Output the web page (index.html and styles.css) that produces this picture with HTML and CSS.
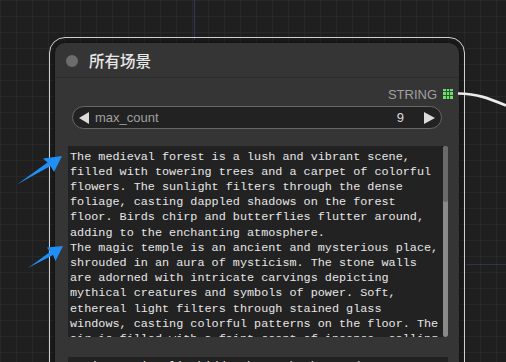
FILE: index.html
```html
<!DOCTYPE html>
<html lang="en">

<head>
    <meta charset="UTF-8">
    <meta name="viewport" content="width=device-width, initial-scale=1.0">
    <title>Node Canvas</title>
    <link rel="stylesheet" href="styles.css">
</head>

<body>
    <div class="canvas">
        <!-- faint links behind the node -->
        <svg class="links-back" width="506" height="362">
            <line x1="194.5" y1="0" x2="194.5" y2="40" stroke="#2c3a5c" stroke-width="1" />
            <line x1="466" y1="264.5" x2="506" y2="264.5" stroke="#2c3450" stroke-width="1" />
        </svg>

        <div class="node">
            <div class="node-title">
                <span class="dot"></span>
                <span class="title-text">所有场景</span>
            </div>
            <div class="node-body">
                <div class="output-row">
                    <span class="slot-label">STRING</span>
                    <span class="slot-grid">
                        <i></i><i></i><i></i><i></i><i></i><i></i><i></i><i></i><i></i>
                    </span>
                </div>

                <div class="number-widget">
                    <span class="arrow arrow-left"></span>
                    <span class="widget-label">max_count</span>
                    <span class="widget-value">9</span>
                    <span class="arrow arrow-right"></span>
                </div>

                <div class="textbox">
                    <div class="text-content">The medieval forest is a lush and vibrant scene,
filled with towering trees and a carpet of colorful
flowers. The sunlight filters through the dense
foliage, casting dappled shadows on the forest
floor. Birds chirp and butterflies flutter around,
adding to the enchanting atmosphere.
The magic temple is an ancient and mysterious place,
shrouded in an aura of mysticism. The stone walls
are adorned with intricate carvings depicting
mythical creatures and symbols of power. Soft,
ethereal light filters through stained glass
windows, casting colorful patterns on the floor. The
air is filled with a faint scent of incense, calling</div>
                    <div class="scrollbar">
                        <div class="thumb"></div>
                    </div>
                </div>

                <div class="textbox textbox-next">
                    <div class="text-content">Ancient ruins lie hidden beneath the sand.</div>
                </div>
            </div>
        </div>

        <!-- output link leaving the STRING slot -->
        <svg class="wire" width="506" height="362">
            <path d="M458 93.5 C478 94, 488 98, 506 105.5" fill="none" stroke="#ececec" stroke-width="2.6" />
        </svg>

        <!-- annotation arrows -->
        <svg class="marks" width="506" height="362">
            <polygon points="62,156 43,158.5 47.5,162.5 17,184.5 50.5,166 54,172" fill="#1f8ff5" />
            <polygon points="63,246 47,247.5 50,252 28,268 53,255 55.5,261" fill="#1f8ff5" />
        </svg>
    </div>
</body>

</html>
```

FILE: styles.css
```css
body {
    margin: 0;
    padding: 0;
    overflow: hidden;
    background: #1f1f1f;
}

.canvas {
    position: relative;
    width: 506px;
    height: 362px;
    overflow: hidden;
    background-color: #1f1f1f;
    background-image:
        linear-gradient(#282828 1px, transparent 1px),
        linear-gradient(90deg, #282828 1px, transparent 1px);
    background-size: 16px 16px;
}

.links-back,
.wire,
.marks {
    position: absolute;
    left: 0;
    top: 0;
    pointer-events: none;
}

/* node sits on the free canvas */
.node {
    position: absolute;
    left: 55px;
    top: 43px;
    width: 404px;
    height: 340px;
    background: #353535;
    border-radius: 10px 10px 0 0;
    outline: 1.5px solid #d0d0d0;
    outline-offset: 5px;
    box-shadow: 0 0 6px 2px rgba(0, 0, 0, 0.45);
    font-family: 'Liberation Sans', Arial, sans-serif;
}

.node-title {
    height: 34px;
    display: flex;
    align-items: center;
    padding-left: 11px;
    border-bottom: 1px solid #2c2c2c;
}

.dot {
    width: 12px;
    height: 12px;
    border-radius: 50%;
    background: #6c6c6c;
    margin-top: 2px;
}

.title-text {
    margin-left: 11px;
    font-family: 'Noto Sans CJK SC', 'Noto Sans', sans-serif;
    font-size: 15.5px;
    font-weight: 500;
    color: #e8e8e8;
}

.node-body {
    display: flex;
    flex-direction: column;
}

.output-row {
    height: 18px;
    margin-top: 7px;
    display: flex;
    justify-content: flex-end;
    align-items: center;
    padding-right: 6px;
}

.slot-label {
    font-size: 13px;
    color: #a0a0a0;
    margin-right: 6px;
}

.slot-grid {
    width: 10px;
    height: 10px;
    display: grid;
    grid-template-columns: repeat(3, 1fr);
    gap: 1px;
    background: #2c5a2c;
    margin-top: -1px;
}

.slot-grid i {
    background: #6ee06e;
}

.number-widget {
    height: 21px;
    margin: 3px 17px 0;
    border: 1px solid #676767;
    border-radius: 12px;
    background: #222;
    display: flex;
    align-items: center;
    padding: 0 6px;
    font-size: 13px;
}

.arrow {
    width: 0;
    height: 0;
    border-top: 6px solid transparent;
    border-bottom: 6px solid transparent;
}

.arrow-left {
    border-right: 10px solid #dcdcdc;
}

.arrow-right {
    border-left: 11px solid #dcdcdc;
}

.widget-label {
    color: #a0a0a0;
    margin-left: 6px;
    flex: 1;
}

.widget-value {
    color: #dcdcdc;
    margin-right: 20px;
}

.textbox {
    height: 191px;
    margin: 17px 11px 0 13px;
    background: #222;
    display: flex;
    overflow: hidden;
}

.text-content {
    flex: 1;
    padding: 3.5px 0 0 2px;
    font-family: 'Liberation Mono', 'Courier New', monospace;
    font-size: 11.8px;
    line-height: 15.2px;
    color: #e6e6e6;
    white-space: pre;
    overflow: hidden;
}

.scrollbar {
    width: 5px;
    background: #8a8a8a;
    border-radius: 3px;
    display: flex;
    flex-direction: column;
}

.thumb {
    height: 56px;
    background: #6a6a6a;
    border-radius: 3px;
}

.textbox-next {
    height: 40px;
    margin-top: 20px;
}

.textbox-next .text-content {
    padding-top: 2px;
}
```
